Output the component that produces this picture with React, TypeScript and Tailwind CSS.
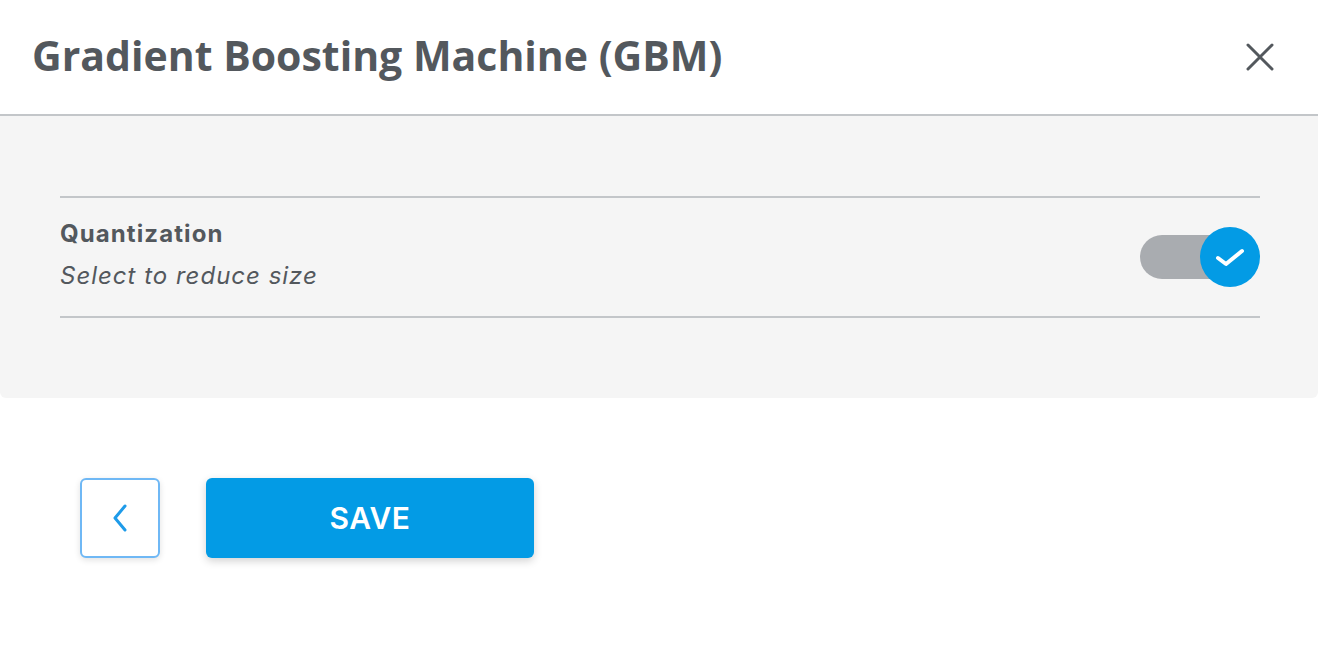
import React from "react";

export default function App() {
  return (
    <div className="w-[1318px] h-[654px] bg-white flex flex-col" style={{ fontFamily: "Inter, 'Open Sans', sans-serif" }}>
      <div className="h-[116px] flex items-center justify-between pl-[32px] pr-[43px] border-b-2 border-[#c3c6c9] shrink-0">
        <h1 className="text-[41px] font-bold text-[#53585d] leading-none pb-[4px]" style={{ fontFamily: "'Open Sans', Lato, sans-serif" }}>
          Gradient Boosting Machine (GBM)
        </h1>
        <svg width="30" height="30" viewBox="0 0 30 30" fill="none" stroke="#53585d" strokeWidth="3" strokeLinecap="round">
          <path d="M3 3 L27 27 M27 3 L3 27" />
        </svg>
      </div>
      <div className="h-[282px] bg-[#f5f5f5] rounded-b-[6px] pl-[60px] pr-[58px] pt-[80px] shrink-0">
        <div className="border-t-2 border-b-2 border-[#c3c6c9] h-[122px] flex items-center justify-between">
          <div className="flex flex-col pb-[4px]">
            <span className="text-[24px] font-bold text-[#53585d] leading-[30px] tracking-[1.1px]">Quantization</span>
            <span className="text-[24px] italic text-[#53585d] leading-[30px] mt-[12px] tracking-[1px]">Select to reduce size</span>
          </div>
          <div className="relative w-[120px] h-[60px] flex items-center">
            <div className="w-[92px] h-[44px] rounded-full bg-[#a9acb0]" />
            <div className="absolute right-0 top-0 w-[60px] h-[60px] rounded-full bg-[#039be5] flex items-center justify-center">
              <svg width="30" height="22" viewBox="0 0 30 22" fill="none" stroke="white" strokeWidth="4" strokeLinecap="round" strokeLinejoin="round">
                <path d="M3 12 L11 18 L27 5" />
              </svg>
            </div>
          </div>
        </div>
      </div>
      <div className="flex items-start gap-[46px] pl-[80px] pt-[80px]">
        <button className="w-[80px] h-[80px] rounded-[6px] border-2 border-[#6fb8f5] bg-white flex items-center justify-center shadow-[0_2px_6px_rgba(0,0,0,0.12)]">
          <svg width="20" height="30" viewBox="0 0 20 30" fill="none" stroke="#1e9be9" strokeWidth="3" strokeLinecap="round" strokeLinejoin="round">
            <path d="M15 3 L5 15 L15 27" />
          </svg>
        </button>
        <button className="w-[328px] h-[80px] rounded-[6px] bg-[#039be5] text-white text-[30px] font-semibold tracking-[0.6px] flex items-center justify-center shadow-[0_3px_8px_rgba(0,0,0,0.18)]">
          SAVE
        </button>
      </div>
    </div>
  );
}
